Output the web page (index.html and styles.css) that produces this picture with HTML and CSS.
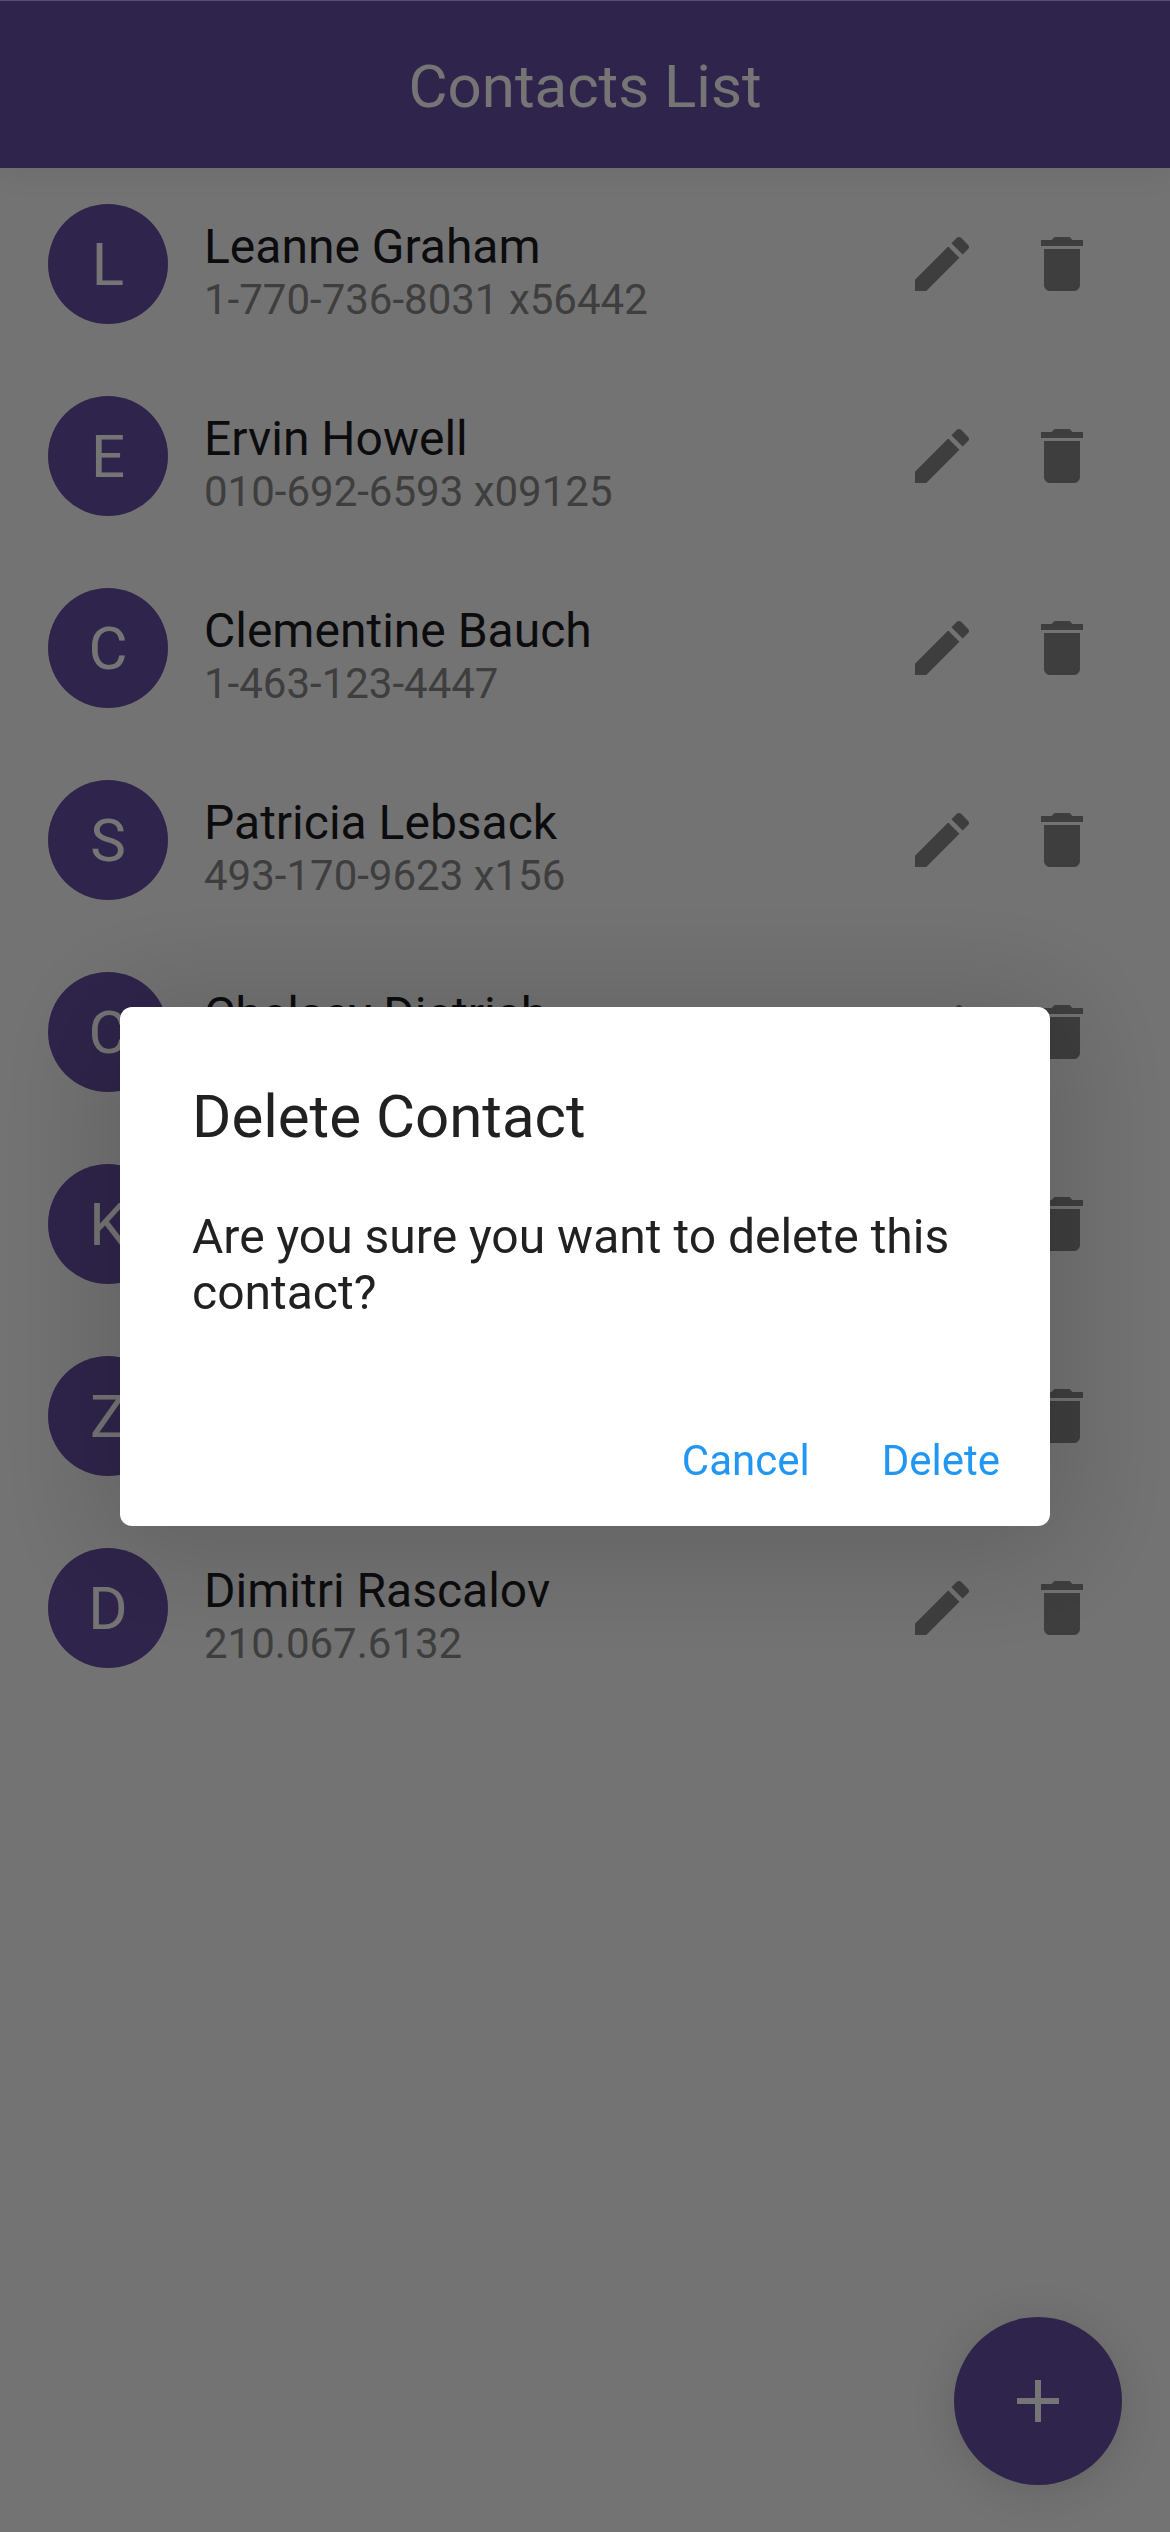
FILE: index.html
```html
<!DOCTYPE html>
<html lang="en">
<head>
  <meta charset="UTF-8">
  <title>Contacts List</title>
  <link rel="stylesheet" href="styles.css">
</head>
<body>
  <header class="app-bar">Contacts List</header>

  <ul class="contact-list">
    <li class="contact">
      <div class="avatar">L</div>
      <div class="info"><div class="name">Leanne Graham</div><div class="phone">1-770-736-8031 x56442</div></div>
      <button class="icon-btn"><svg viewBox="0 0 24 24"><use href="#icon-edit"/></svg></button>
      <button class="icon-btn"><svg viewBox="0 0 24 24"><use href="#icon-delete"/></svg></button>
    </li>
    <li class="contact">
      <div class="avatar">E</div>
      <div class="info"><div class="name">Ervin Howell</div><div class="phone">010-692-6593 x09125</div></div>
      <button class="icon-btn"><svg viewBox="0 0 24 24"><use href="#icon-edit"/></svg></button>
      <button class="icon-btn"><svg viewBox="0 0 24 24"><use href="#icon-delete"/></svg></button>
    </li>
    <li class="contact">
      <div class="avatar">C</div>
      <div class="info"><div class="name">Clementine Bauch</div><div class="phone">1-463-123-4447</div></div>
      <button class="icon-btn"><svg viewBox="0 0 24 24"><use href="#icon-edit"/></svg></button>
      <button class="icon-btn"><svg viewBox="0 0 24 24"><use href="#icon-delete"/></svg></button>
    </li>
    <li class="contact">
      <div class="avatar">S</div>
      <div class="info"><div class="name">Patricia Lebsack</div><div class="phone">493-170-9623 x156</div></div>
      <button class="icon-btn"><svg viewBox="0 0 24 24"><use href="#icon-edit"/></svg></button>
      <button class="icon-btn"><svg viewBox="0 0 24 24"><use href="#icon-delete"/></svg></button>
    </li>
    <li class="contact">
      <div class="avatar">C</div>
      <div class="info"><div class="name">Chelsey Dietrich</div></div>
      <button class="icon-btn"><svg viewBox="0 0 24 24"><use href="#icon-edit"/></svg></button>
      <button class="icon-btn"><svg viewBox="0 0 24 24"><use href="#icon-delete"/></svg></button>
    </li>
    <li class="contact">
      <div class="avatar">K</div>
      <div class="info"></div>
      <button class="icon-btn"><svg viewBox="0 0 24 24"><use href="#icon-edit"/></svg></button>
      <button class="icon-btn"><svg viewBox="0 0 24 24"><use href="#icon-delete"/></svg></button>
    </li>
    <li class="contact">
      <div class="avatar">Z</div>
      <div class="info"></div>
      <button class="icon-btn"><svg viewBox="0 0 24 24"><use href="#icon-edit"/></svg></button>
      <button class="icon-btn"><svg viewBox="0 0 24 24"><use href="#icon-delete"/></svg></button>
    </li>
    <li class="contact">
      <div class="avatar">D</div>
      <div class="info"><div class="name">Dimitri Rascalov</div><div class="phone">210.067.6132</div></div>
      <button class="icon-btn"><svg viewBox="0 0 24 24"><use href="#icon-edit"/></svg></button>
      <button class="icon-btn"><svg viewBox="0 0 24 24"><use href="#icon-delete"/></svg></button>
    </li>
  </ul>

  <button class="fab"><svg viewBox="0 0 24 24"><path d="M19 13h-6v6h-2v-6H5v-2h6V5h2v6h6v2z"/></svg></button>

  <div class="scrim">
    <div class="dialog">
      <h2 class="dialog-title">Delete Contact</h2>
      <p class="dialog-text">Are you sure you want to delete this contact?</p>
      <div class="dialog-actions">
        <button class="text-btn">Cancel</button>
        <button class="text-btn">Delete</button>
      </div>
    </div>
  </div>

  <svg class="icon-defs">
    <symbol id="icon-edit" viewBox="0 0 24 24"><path d="M3 17.25V21h3.75L17.81 9.94l-3.75-3.75L3 17.25zM20.71 7.04c.39-.39.39-1.02 0-1.41l-2.34-2.34c-.39-.39-1.02-.39-1.41 0l-1.83 1.83 3.75 3.75 1.83-1.83z"/></symbol>
    <symbol id="icon-delete" viewBox="0 0 24 24"><path d="M6 19c0 1.1.9 2 2 2h8c1.1 0 2-.9 2-2V7H6v12zM19 4h-3.5l-1-1h-5l-1 1H5v2h14V4z"/></symbol>
  </svg>
</body>
</html>
```

FILE: styles.css
```css
html, body { margin: 0; height: 100%; }
body { position: relative; height: 2532px; overflow: hidden; background: #fafafa; font-family: Roboto, sans-serif; }
button { border: none; background: none; padding: 0; font-family: inherit; cursor: pointer; }

.app-bar { height: 168px; box-sizing: border-box; padding-top: 3px; border-top: 1px solid #c4aef5; display: flex; align-items: center; justify-content: center; background: #6750a4; color: #fff; font-size: 60px; box-shadow: 0 6px 30px rgba(0,0,0,0.06); }

.contact-list { list-style: none; margin: 0; padding: 0; }
.contact { height: 192px; display: flex; align-items: center; padding: 0 48px; }
.avatar { width: 120px; height: 120px; border-radius: 50%; flex-shrink: 0; display: flex; align-items: center; justify-content: center; background: #6750a4; color: #fff; font-size: 60px; }
.info { flex: 1; height: 122px; box-sizing: border-box; margin-left: 36px; padding-top: 16px; }
.name { font-size: 48px; line-height: 56px; color: #1c1b1f; }
.phone { font-size: 42px; line-height: 50px; color: #888; }
.icon-btn { width: 120px; height: 120px; display: flex; align-items: center; justify-content: center; }
.icon-btn svg { width: 72px; height: 72px; fill: #888; }
.icon-defs { display: none; }

.fab { position: absolute; right: 48px; bottom: 47px; width: 168px; height: 168px; border-radius: 50%; display: flex; align-items: center; justify-content: center; background: #6750a4; box-shadow: 0 6px 45px rgba(0,0,0,0.14); }
.fab svg { width: 72px; height: 72px; fill: #fff; }

.scrim { position: fixed; inset: 0; display: flex; align-items: center; justify-content: center; background: rgba(0,0,0,0.54); }
.dialog { width: 930px; height: 519px; box-sizing: border-box; display: flex; flex-direction: column; padding: 68px 72px 0; background: #fff; border-radius: 12px; box-shadow: 0 12px 120px 30px rgba(0,0,0,0.14); color: #212121; }
.dialog-title { margin: 0; font-size: 60px; line-height: 84px; font-weight: 400; }
.dialog-text { margin: 50px 0 0; font-size: 48px; line-height: 56px; }
.dialog-actions { margin-top: auto; padding-bottom: 16px; display: flex; justify-content: flex-end; margin-right: -46px; gap: 24px; }
.text-btn { padding: 24px; font-size: 42px; line-height: 50px; color: #2196f3; }
```
